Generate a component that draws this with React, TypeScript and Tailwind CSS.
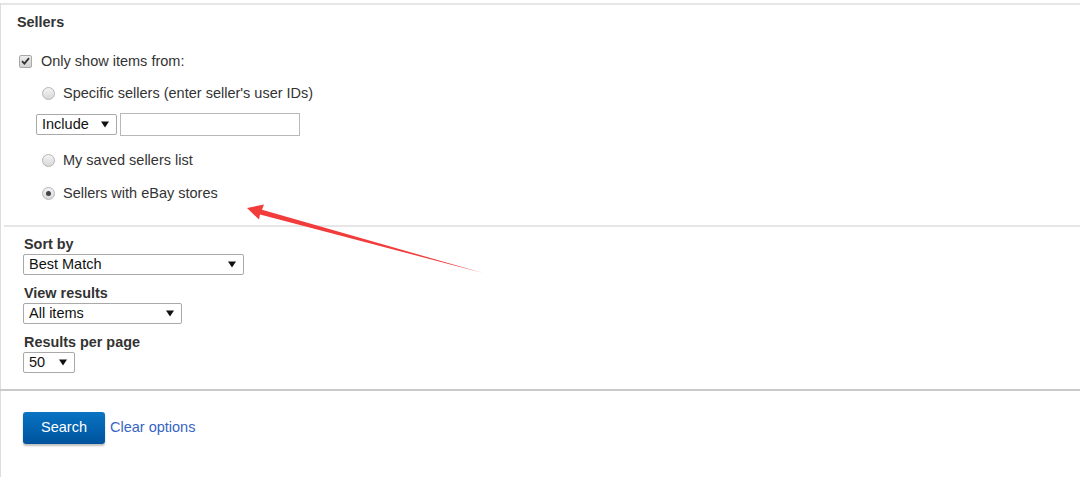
import React from "react";

const font = { fontFamily: '"Liberation Sans", Arial, sans-serif' };

const Caret = () => (
  <svg width="8" height="7" viewBox="0 0 8 7" className="shrink-0">
    <path d="M0 0.5 L8 0.5 L4 6.5 Z" fill="#111" />
  </svg>
);

const Select = ({ label, className }: { label: string; className: string }) => (
  <div
    className={`flex items-center justify-between border border-[#a9a9a9] rounded-[2px] bg-white pl-[5px] pr-[7px] text-[14.5px] leading-none text-[#111] ${className}`}
  >
    <span>{label}</span>
    <Caret />
  </div>
);

const Radio = ({ checked }: { checked?: boolean }) => (
  <span className="flex items-center justify-center w-[13px] h-[13px] rounded-full border border-[#b5b5b5] bg-gradient-to-b from-[#f4f4f4] to-[#d8d8d8] shrink-0">
    {checked && <span className="w-[5px] h-[5px] rounded-full bg-[#444]" />}
  </span>
);

const Checkbox = () => (
  <span className="flex items-center justify-center w-[13px] h-[13px] rounded-[2px] border border-[#a8a8a8] bg-gradient-to-b from-[#ececec] to-[#d2d2d2] shrink-0">
    <svg width="9" height="8" viewBox="0 0 9 8">
      <path d="M1 4.2 L3.4 6.6 L8 1.2" stroke="#333" strokeWidth="1.8" fill="none" />
    </svg>
  </span>
);

const Field = ({ label, children }: { label: string; children: React.ReactNode }) => (
  <div>
    <div className="pl-px text-[14.4px] leading-[20px] font-bold text-[#333]">{label}</div>
    {children}
  </div>
);

export default function App() {
  return (
    <div className="relative w-[1080px] h-[477px] bg-white pt-[3px] overflow-hidden" style={font}>
      <div className="flex flex-col h-[474px] border-l border-[#dcdcdc]">
        {/* sellers */}
        <div className="h-[222px] border-t-2 border-[#e6e6e6] pl-[16px] pt-[7px] text-[14.5px] leading-[20px] text-[#333]">
          <div className="font-bold text-[14.4px]">Sellers</div>
          <div className="flex items-center mt-[19px] pl-[2px]">
            <Checkbox />
            <span className="ml-[9px]">Only show items from:</span>
          </div>
          <div className="flex items-center mt-[12px] pl-[25px]">
            <Radio />
            <span className="ml-[8px]">Specific sellers (enter seller's user IDs)</span>
          </div>
          <div className="flex items-center mt-[10px] pl-[19px] h-[23px]">
            <Select label="Include" className="w-[81px] h-[21px]" />
            <div className="ml-[3px] w-[180px] h-[23px] border border-[#b8b8b8] bg-white" />
          </div>
          <div className="flex items-center mt-[14px] pl-[25px]">
            <Radio />
            <span className="ml-[8px]">My saved sellers list</span>
          </div>
          <div className="flex items-center mt-[13px] pl-[25px]">
            <Radio checked />
            <span className="ml-[8px]">Sellers with eBay stores</span>
          </div>
        </div>

        {/* sort / view options */}
        <div className="ml-[3px] h-[164px] border-t-2 border-[#e6e6e6] pl-[19px] pt-[7px] flex flex-col gap-[8px]">
          <Field label="Sort by">
            <Select label="Best Match" className="w-[221px] h-[21px]" />
          </Field>
          <Field label="View results">
            <Select label="All items" className="w-[159px] h-[21px]" />
          </Field>
          <Field label="Results per page">
            <Select label="50" className="w-[52px] h-[21px]" />
          </Field>
        </div>

        {/* actions */}
        <div className="-ml-px flex-1 border-t-2 border-[#cacaca]">
          <div className="flex items-center pl-[23px] pt-[21px]">
            <button className="w-[82px] h-[32px] rounded-[3px] bg-gradient-to-b from-[#0a74c4] to-[#00529c] text-white text-[14.5px] shadow-[0_2px_2px_rgba(0,0,0,0.25)]">
              Search
            </button>
            <a className="ml-[5px] text-[14.5px] text-[#3665c3] cursor-pointer">Clear options</a>
          </div>
        </div>
      </div>

      {/* annotation arrow */}
      <svg className="absolute inset-0 pointer-events-none" width="1080" height="477" viewBox="0 0 1080 477">
        <polygon
          points="247,208 264,204.5 262,209.8 483,273 260,214.6 259,219.5"
          fill="#f23c3c"
        />
      </svg>
    </div>
  );
}
